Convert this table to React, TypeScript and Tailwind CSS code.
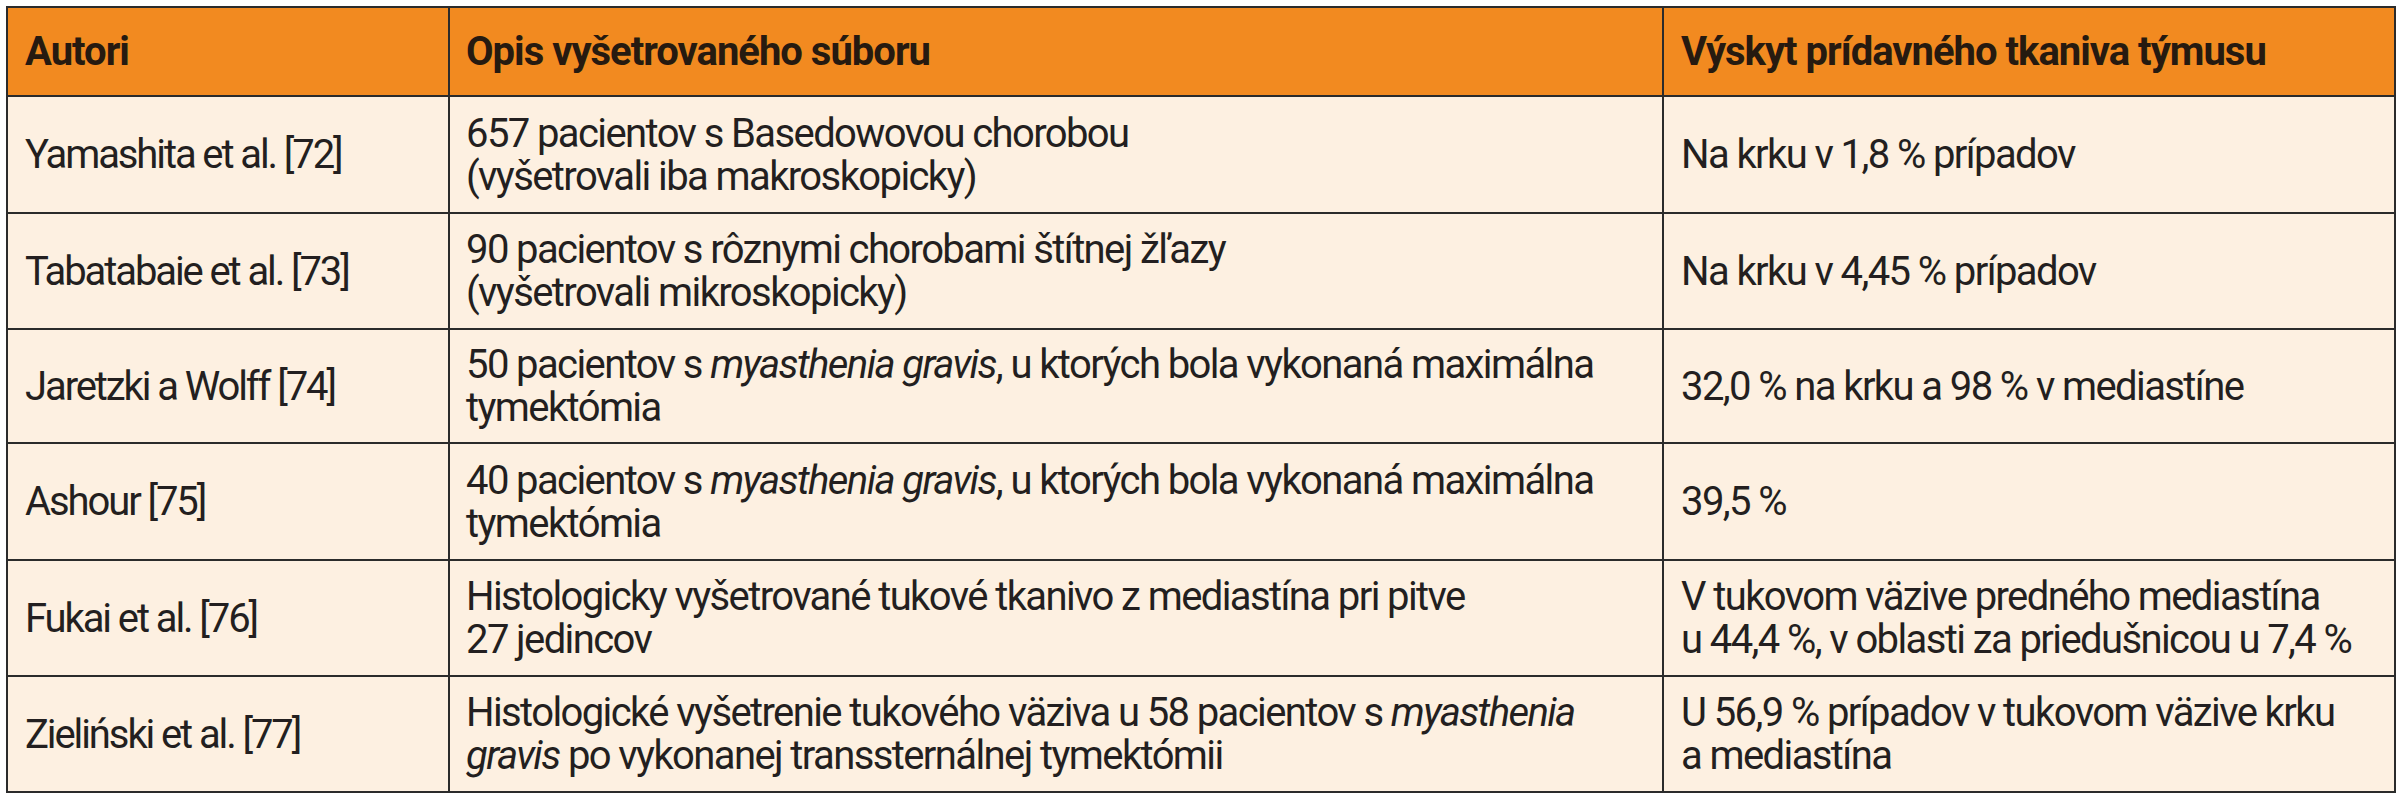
import React from "react";

const font = { fontFamily: "Roboto, 'Noto Sans', sans-serif" };

type Row = { a: string; b: React.ReactNode; c: React.ReactNode; h: string };

const rows: Row[] = [
  {
    a: "Yamashita et al. [72]",
    b: (
      <>
        657 pacientov s Basedowovou chorobou
        <br />
        (vyšetrovali iba makroskopicky)
      </>
    ),
    c: "Na krku v 1,8 % prípadov",
    h: "h-[117px]",
  },
  {
    a: "Tabatabaie et al. [73]",
    b: (
      <>
        90 pacientov s rôznymi chorobami štítnej žľazy
        <br />
        (vyšetrovali mikroskopicky)
      </>
    ),
    c: "Na krku v 4,45 % prípadov",
    h: "h-[116px]",
  },
  {
    a: "Jaretzki a Wolff [74]",
    b: (
      <>
        50 pacientov s <i>myasthenia gravis</i>, u ktorých bola vykonaná maximálna
        <br />
        tymektómia
      </>
    ),
    c: "32,0 % na krku a 98 % v mediastíne",
    h: "h-[114px]",
  },
  {
    a: "Ashour [75]",
    b: (
      <>
        40 pacientov s <i>myasthenia gravis</i>, u ktorých bola vykonaná maximálna
        <br />
        tymektómia
      </>
    ),
    c: "39,5 %",
    h: "h-[117px]",
  },
  {
    a: "Fukai et al. [76]",
    b: (
      <>
        Histologicky vyšetrované tukové tkanivo z mediastína pri pitve
        <br />
        27 jedincov
      </>
    ),
    c: (
      <>
        V tukovom väzive predného mediastína
        <br />
        u 44,4 %, v oblasti za priedušnicou u 7,4 %
      </>
    ),
    h: "h-[116px]",
  },
  {
    a: "Zieliński et al. [77]",
    b: (
      <>
        Histologické vyšetrenie tukového väziva u 58 pacientov s <i>myasthenia</i>
        <br />
        <i>gravis</i> po vykonanej transsternálnej tymektómii
      </>
    ),
    c: (
      <>
        U 56,9 % prípadov v tukovom väzive krku
        <br />a mediastína
      </>
    ),
    h: "h-[116px]",
  },
];

export default function App() {
  return (
    <div className="w-[2400px] h-[800px] bg-white pt-[6px] pl-[6px]" style={font}>
      <table className="table-fixed border-collapse w-[2388px] border-2 border-[#2b2b2b] text-[40px] leading-[43px] text-[#231f20] tracking-[-1.6px]">
        <colgroup>
          <col className="w-[442px]" />
          <col className="w-[1214px]" />
          <col className="w-[732px]" />
        </colgroup>
        <thead>
          <tr className="h-[89px] bg-[#f28a20]">
            <th className="border-2 border-[#2b2b2b] pl-[17px] text-left font-bold align-middle text-[#261a10] tracking-[-1px]">Autori</th>
            <th className="border-2 border-[#2b2b2b] pl-[16px] text-left font-bold align-middle text-[#261a10] tracking-[-1px]">Opis vyšetrovaného súboru</th>
            <th className="border-2 border-[#2b2b2b] pl-[17px] text-left font-bold align-middle text-[#261a10] tracking-[-1px]">Výskyt prídavného tkaniva týmusu</th>
          </tr>
        </thead>
        <tbody className="bg-[#fdf0e1]">
          {rows.map((r, i) => (
            <tr key={i} className={r.h}>
              <td className="border-2 border-[#2b2b2b] pl-[17px] align-middle whitespace-nowrap tracking-[-2.1px]">{r.a}</td>
              <td className="border-2 border-[#2b2b2b] pl-[16px] align-middle whitespace-nowrap">{r.b}</td>
              <td className="border-2 border-[#2b2b2b] pl-[17px] align-middle whitespace-nowrap">{r.c}</td>
            </tr>
          ))}
        </tbody>
      </table>
    </div>
  );
}
